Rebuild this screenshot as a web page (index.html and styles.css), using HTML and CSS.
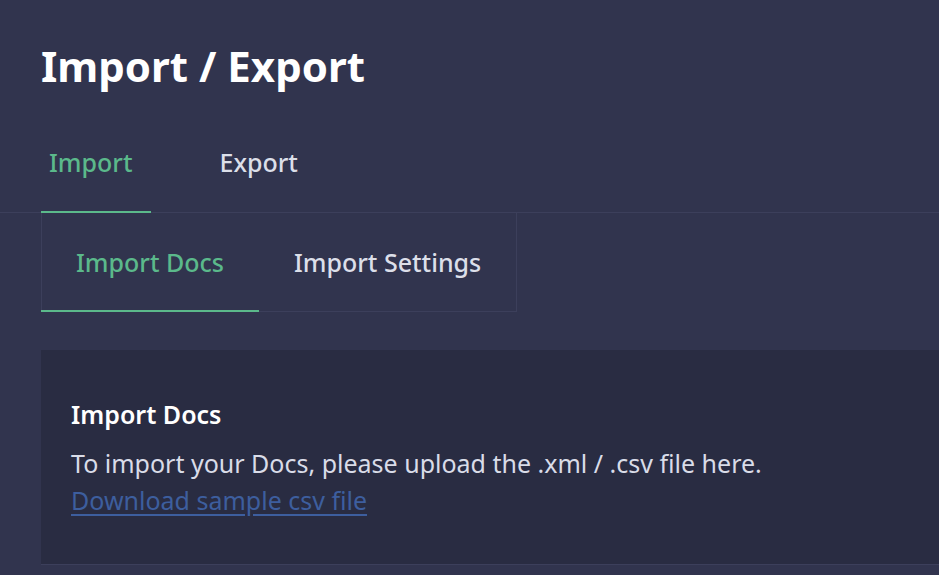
FILE: index.html
```html
<!DOCTYPE html>
<html lang="en">
<head>
<meta charset="utf-8">
<title>Import / Export</title>
<link rel="stylesheet" href="styles.css">
</head>
<body>
<div class="page">
  <h1 class="title">Import / Export</h1>
  <nav class="tabs">
    <a class="tab active" href="#">Import</a>
    <a class="tab" href="#">Export</a>
  </nav>
  <div class="content">
    <div class="subtabs">
      <a class="subtab active" href="#">Import Docs</a>
      <a class="subtab" href="#">Import Settings</a>
    </div>
    <section class="card">
      <h2 class="card-title">Import Docs</h2>
      <p class="card-text">To import your Docs, please upload the .xml / .csv file here.<br>
      <a class="link" href="#">Download sample csv file</a></p>
    </section>
  </div>
</div>
</body>
</html>
```
FILE: styles.css
```css
html, body {
  margin: 0;
  padding: 0;
  background: #31344e;
  height: 100%;
  overflow: hidden;
}
body {
  font-family: "Noto Sans", "Open Sans", sans-serif;
  color: #d9dce8;
}
.page {
  display: flex;
  flex-direction: column;
}
.title {
  margin: 0;
  padding: 40px 0 0 41px;
  height: 86px;
  box-sizing: border-box;
  font-size: 42px;
  line-height: 52px;
  font-weight: 700;
  color: #ffffff;
  letter-spacing: 0;
}
.tabs {
  display: flex;
  align-items: stretch;
  padding: 27px 0 0 41px;
  height: 127px;
  box-sizing: border-box;
  border-bottom: 1px solid #3c3f5b;
}
.tab {
  display: flex;
  align-items: center;
  padding: 0 19px 0 8px;
  margin-right: 60px;
  font-size: 25px;
  font-weight: 500;
  color: #dcdfe9;
  text-decoration: none;
  border-bottom: 2px solid transparent;
  margin-bottom: -1px;
}
.tab.active {
  color: #5bb98b;
  border-bottom-color: #5bb98b;
}
.content {
  padding: 0 0 0 41px;
  display: flex;
  flex-direction: column;
  align-items: flex-start;
}
.subtabs {
  display: flex;
  height: 99px;
  box-sizing: border-box;
  border: 1px solid #3c3f5b;
  border-top: 0;
}
.subtab {
  display: flex;
  align-items: center;
  padding: 0 35px 0 35px;
  font-size: 25px;
  font-weight: 500;
  color: #dcdfe9;
  text-decoration: none;
  border-bottom: 2px solid transparent;
  margin-bottom: -1px;
  margin-left: -1px;
}
.subtab + .subtab {
  margin-left: 0;
}
.subtab.active {
  color: #5bb98b;
  border-bottom-color: #5bb98b;
}
.card {
  margin-top: 38px;
  align-self: stretch;
  background: #292c42;
  border-bottom: 1px solid #3c3f5b;
  height: 215px;
  box-sizing: border-box;
  padding: 48px 30px 0 30px;
}
.card-title {
  margin: 0;
  font-size: 25px;
  line-height: 32px;
  font-weight: 600;
  color: #ffffff;
}
.card-text {
  margin: 15px 0 0 0;
  font-size: 25px;
  line-height: 37px;
  color: #d9dce8;
}
.link {
  color: #3d5e9e;
  text-decoration: underline;
  text-underline-offset: 4px;
}
```
